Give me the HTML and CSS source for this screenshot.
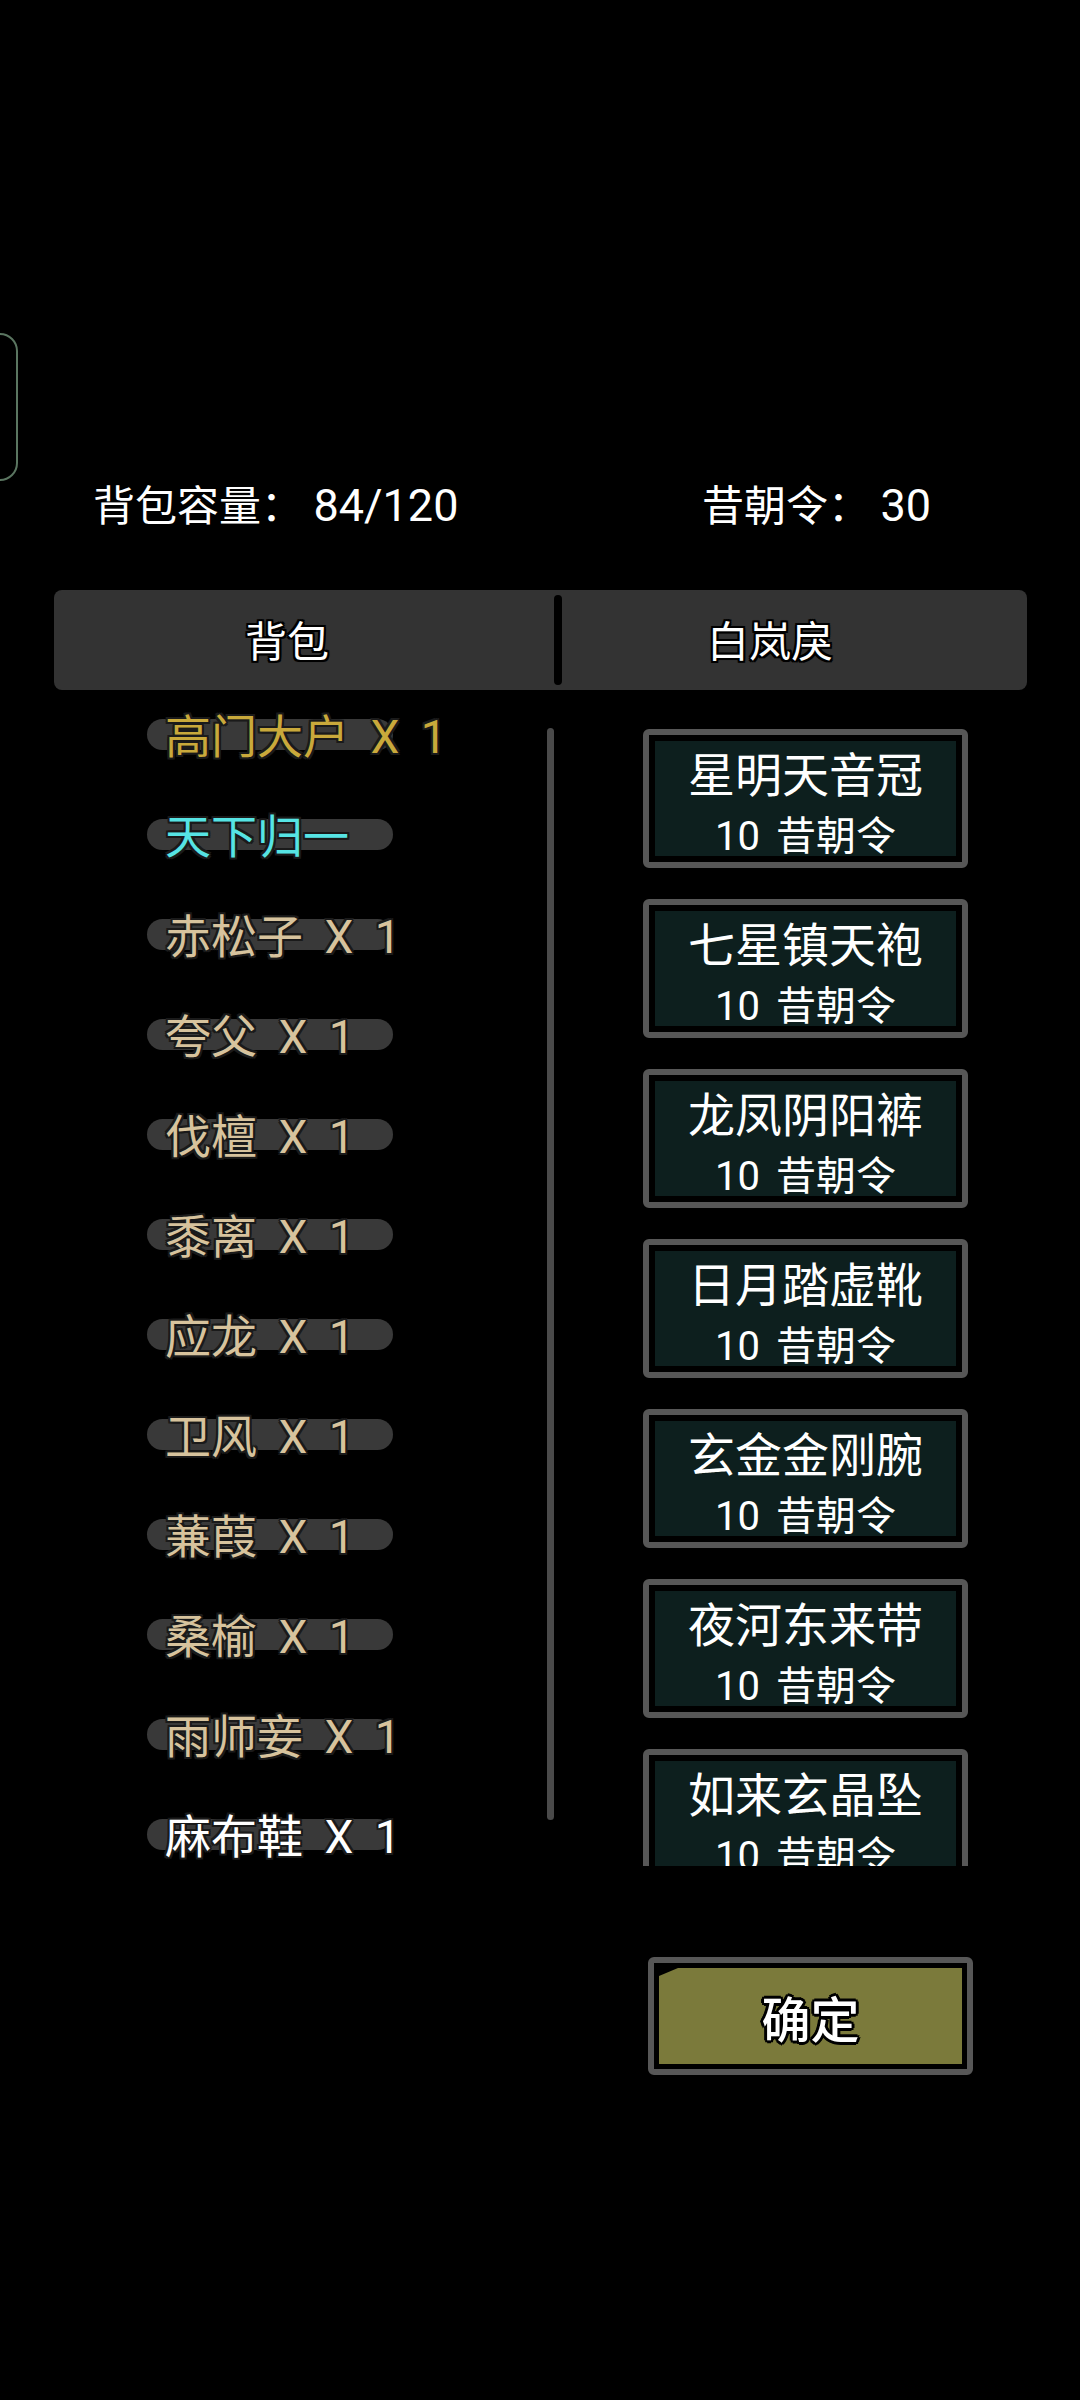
FILE: index.html
```html
<!DOCTYPE html>
<html lang="zh-CN">
<head>
<meta charset="utf-8">
<title>背包</title>
<link rel="stylesheet" href="styles.css">
</head>
<body>
<div class="page">
  <div class="side-handle"></div>

  <div class="stats">
    <div class="stat">背包容量：&nbsp;<span class="num">84/120</span></div>
    <div class="stat">昔朝令：&nbsp;<span class="num">30</span></div>
  </div>

  <div class="tabs">
    <div class="tab tab-bag">背包</div>
    <div class="tab-divider"></div>
    <div class="tab tab-shop">白岚戾</div>
  </div>

  <div class="content">
    <div class="bag">
      <div class="bag-list">
        <div class="bag-item"><span class="pill gold">高门大户 X 1</span></div>
        <div class="bag-item"><span class="pill cyan">天下归一</span></div>
        <div class="bag-item"><span class="pill tan">赤松子 X 1</span></div>
        <div class="bag-item"><span class="pill tan">夸父 X 1</span></div>
        <div class="bag-item"><span class="pill tan">伐檀 X 1</span></div>
        <div class="bag-item"><span class="pill tan">黍离 X 1</span></div>
        <div class="bag-item"><span class="pill tan">应龙 X 1</span></div>
        <div class="bag-item"><span class="pill tan">卫风 X 1</span></div>
        <div class="bag-item"><span class="pill tan">蒹葭 X 1</span></div>
        <div class="bag-item"><span class="pill tan">桑榆 X 1</span></div>
        <div class="bag-item"><span class="pill tan">雨师妾 X 1</span></div>
        <div class="bag-item"><span class="pill white">麻布鞋 X 1</span></div>
      </div>
      <div class="scrollbar"></div>
    </div>

    <div class="shop">
      <div class="card"><div class="card-inner"><div class="card-name">星明天音冠</div><div class="card-price">10 昔朝令</div></div></div>
      <div class="card"><div class="card-inner"><div class="card-name">七星镇天袍</div><div class="card-price">10 昔朝令</div></div></div>
      <div class="card"><div class="card-inner"><div class="card-name">龙凤阴阳裤</div><div class="card-price">10 昔朝令</div></div></div>
      <div class="card"><div class="card-inner"><div class="card-name">日月踏虚靴</div><div class="card-price">10 昔朝令</div></div></div>
      <div class="card"><div class="card-inner"><div class="card-name">玄金金刚腕</div><div class="card-price">10 昔朝令</div></div></div>
      <div class="card"><div class="card-inner"><div class="card-name">夜河东来带</div><div class="card-price">10 昔朝令</div></div></div>
      <div class="card"><div class="card-inner"><div class="card-name">如来玄晶坠</div><div class="card-price">10 昔朝令</div></div></div>
    </div>
  </div>

  <div class="actions">
    <div class="confirm">
      <div class="confirm-fill"><span class="confirm-text">确定</span></div>
    </div>
  </div>
</div>
</body>
</html>
```

FILE: styles.css
```css
html, body {
  margin: 0;
  padding: 0;
  background: #000;
}

body {
  width: 1080px;
  height: 2400px;
  overflow: hidden;
  font-family: Roboto, "Noto Sans CJK SC", sans-serif;
  color: #fff;
}

.page {
  position: relative;
  width: 1080px;
  height: 2400px;
}

.side-handle {
  position: absolute;
  left: -22px;
  top: 333px;
  width: 40px;
  height: 148px;
  box-sizing: border-box;
  border: 2px solid #5a7560;
  border-radius: 18px;
}

/* stats row */
.stats {
  display: grid;
  grid-template-columns: 609px auto;
  padding: 476px 0 0 93px;
  height: 60px;
  font-size: 42px;
  line-height: 60px;
  color: #fff;
}

.stat {
  white-space: nowrap;
}

.num {
  font-size: 45px;
}

/* tabs */
.tabs {
  display: flex;
  align-items: center;
  margin: 54px 53px 0 54px;
  height: 100px;
  background: #333;
  border-radius: 8px;
}

.tab {
  box-sizing: border-box;
  text-align: center;
  font-size: 42px;
  line-height: 100px;
  padding-top: 6px;
  color: #fff;
  text-shadow:
    2px 0 0 #000, -2px 0 0 #000, 0 2px 0 #000, 0 -2px 0 #000,
    2px 2px 0 #000, -2px -2px 0 #000, 2px -2px 0 #000, -2px 2px 0 #000,
    0 0 3px #000;
}

.tab-bag {
  width: 500px;
  padding-right: 34px;
}

.tab-divider {
  width: 8px;
  height: 90px;
  background: #000;
  border-radius: 4px;
}

.tab-shop {
  flex: 1;
  padding-right: 49px;
}

/* content */
.content {
  display: flex;
  height: 1176px;
}

.bag {
  display: flex;
  width: 554px;
}

.bag-list {
  width: 547px;
  box-sizing: border-box;
  padding-left: 147px;
  overflow: hidden;
}

.bag-item {
  height: 100px;
  box-sizing: border-box;
  padding-top: 29px;
}

.pill {
  display: block;
  width: 246px;
  height: 31px;
  box-sizing: border-box;
  padding-left: 18px;
  border-radius: 16px;
  background: #393939;
  font-size: 46px;
  line-height: 37px;
  white-space: nowrap;
  word-spacing: 10px;
  text-shadow:
    2px 0 0 #1a1a1a, -2px 0 0 #1a1a1a, 0 2px 0 #1a1a1a, 0 -2px 0 #1a1a1a,
    2px 2px 0 #1a1a1a, -2px -2px 0 #1a1a1a, 2px -2px 0 #1a1a1a, -2px 2px 0 #1a1a1a;
}

.gold { color: #c9a93b; }
.cyan { color: #56e4e4; }
.tan { color: #d7c39d; }
.white { color: #ffffff; }

.scrollbar {
  width: 7px;
  height: 1092px;
  margin-top: 38px;
  background: #4a4a4a;
  border-radius: 4px;
}

/* shop cards */
.shop {
  display: flex;
  flex-direction: column;
  gap: 31px;
  margin-left: 89px;
  width: 325px;
  box-sizing: border-box;
  padding-top: 39px;
  overflow: hidden;
}

.card {
  flex-shrink: 0;
  height: 139px;
  box-sizing: border-box;
  border: 6px solid #575757;
  border-radius: 6px;
  background: #000;
  padding: 6px;
}

.card-inner {
  height: 115px;
  box-sizing: border-box;
  padding-top: 4px;
  background: #0d1f1e;
  text-align: center;
}

.card-name {
  font-size: 47px;
  line-height: 62px;
  color: #fff;
}

.card-price {
  font-size: 40px;
  line-height: 44px;
  padding-top: 8px;
  color: #fff;
  word-spacing: 6px;
}

/* confirm */
.actions {
  margin-top: 91px;
  padding-left: 648px;
}

.confirm {
  width: 325px;
  height: 118px;
  box-sizing: border-box;
  border: 6px solid #575757;
  border-radius: 6px;
  background: #000;
  padding: 5px;
}

.confirm-fill {
  height: 100%;
  display: flex;
  align-items: center;
  justify-content: center;
  background: #7b7a3b;
  clip-path: polygon(19px 0, 100% 0, 100% 100%, 0 100%, 0 8px);
}

.confirm-text {
  font-size: 49px;
  font-weight: 500;
  color: #fff;
  text-shadow:
    3px 0 0 #000, -3px 0 0 #000, 0 3px 0 #000, 0 -3px 0 #000,
    2px 2px 0 #000, -2px -2px 0 #000, 2px -2px 0 #000, -2px 2px 0 #000;
}
```
